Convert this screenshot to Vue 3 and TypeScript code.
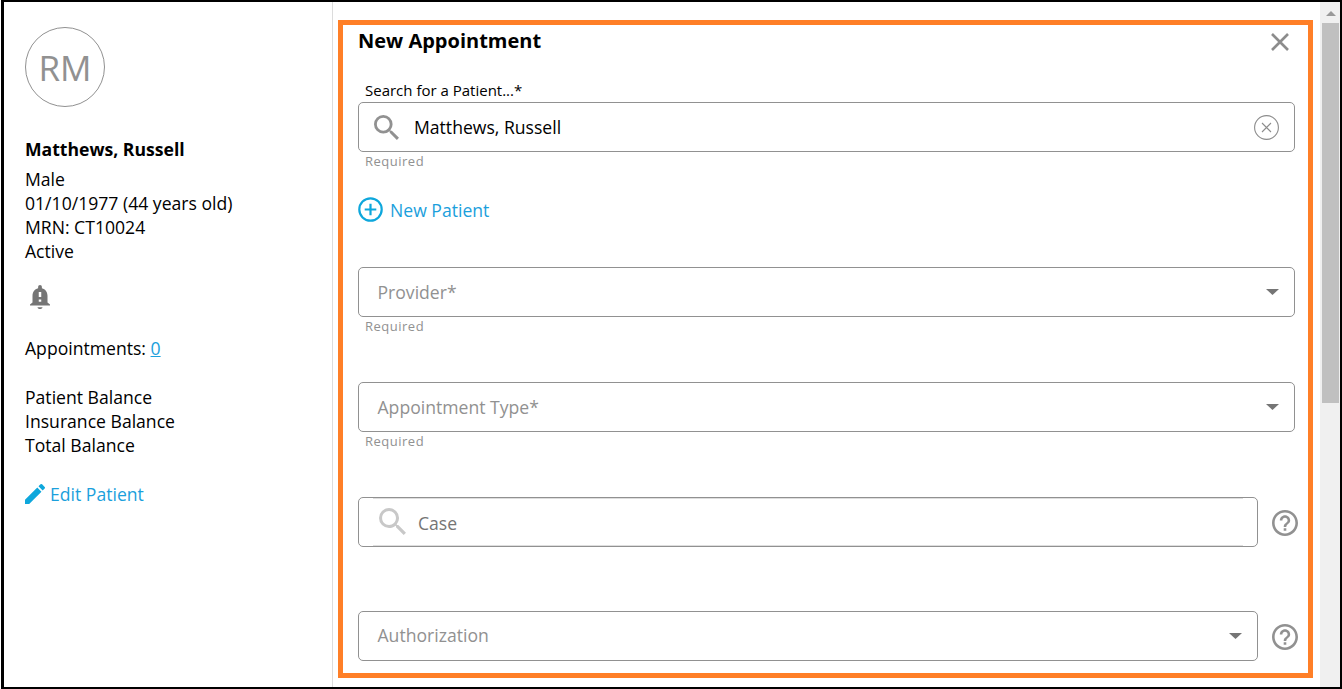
<script setup lang="ts">
interface Field {
  id: string
  label: string
  kind: 'select' | 'search'
  required: boolean
  help: boolean
}

const patient = {
  initials: 'RM',
  name: 'Matthews, Russell',
  details: ['Male', '01/10/1977 (44 years old)', 'MRN: CT10024', 'Active'],
  appointments: 0,
}

const balances: string[] = ['Patient Balance', 'Insurance Balance', 'Total Balance']

const fields: Field[] = [
  { id: 'provider', label: 'Provider*', kind: 'select', required: true, help: false },
  { id: 'type', label: 'Appointment Type*', kind: 'select', required: true, help: false },
  { id: 'case', label: 'Case', kind: 'search', required: false, help: true },
  { id: 'auth', label: 'Authorization', kind: 'select', required: false, help: true },
]
</script>

<template>
  <div class="window">
    <aside class="sidebar">
      <div class="avatar"><span>{{ patient.initials }}</span></div>
      <h2 class="name"><span>{{ patient.name }}</span></h2>
      <div v-for="line in patient.details" :key="line" class="line"><span>{{ line }}</span></div>
      <svg class="bell" viewBox="4 2 16 20" preserveAspectRatio="none">
        <path fill="#757575" d="M12 22c1.1 0 2-.7 2-1.5h-4c0 .8.9 1.5 2 1.5zm6-5.5V11c0-3.07-1.63-5.64-4.5-6.32V3.5a1.5 1.5 0 0 0-3 0v1.18C7.64 5.36 6 7.92 6 11v5.5l-2 1.8V19h16v-.7l-2-1.8zM13 16h-2v-2h2v2zm0-4h-2V7.8h2V12z" />
      </svg>
      <div class="line appointments">Appointments: <a>{{ patient.appointments }}</a></div>
      <div class="balances">
        <div v-for="b in balances" :key="b" class="line"><span>{{ b }}</span></div>
      </div>
      <a class="edit">
        <svg viewBox="3 3 18 18" width="20" height="20">
          <path fill="#0ea7dc" d="M3 17.25V21h3.75L17.81 9.94l-3.75-3.75L3 17.25zM20.71 7.04a1 1 0 0 0 0-1.41l-2.34-2.34a1 1 0 0 0-1.41 0l-1.83 1.83 3.75 3.75 1.83-1.83z" />
        </svg>
        <span>Edit Patient</span>
      </a>
    </aside>

    <main class="main">
      <section class="panel">
        <header class="head">
          <h1><span>New Appointment</span></h1>
          <svg class="close" viewBox="0 0 18 18" width="18" height="18">
            <path d="M1 1L17 17M17 1L1 17" fill="none" stroke="#8c8c8c" stroke-width="2.6" />
          </svg>
        </header>

        <label class="caption"><span>Search for a Patient...*</span></label>
        <div class="box patient-box">
          <svg class="lens" viewBox="3 3 17.5 17.5" width="25" height="25">
            <path fill="#919191" d="M15.5 14h-.79l-.28-.27A6.47 6.47 0 0 0 16 9.5 6.5 6.5 0 1 0 9.5 16c1.61 0 3.09-.59 4.23-1.57l.27.28v.79l5 4.99L20.49 19l-4.99-5zm-6 0C7.01 14 5 11.99 5 9.5S7.01 5 9.5 5 14 7.01 14 9.5 11.99 14 9.5 14z" />
          </svg>
          <span class="value">{{ patient.name }}</span>
          <svg class="clear" viewBox="0 0 25 25" width="25" height="25" fill="none" stroke="#8c8c8c">
            <circle cx="12.5" cy="12.5" r="11.9" stroke-width="1.1" />
            <path d="M8 8L17 17M17 8L8 17" stroke-width="1.1" />
          </svg>
        </div>
        <div class="hint"><span>Required</span></div>

        <a class="new-patient">
          <svg viewBox="0 0 25 25" width="25" height="25" fill="none" stroke="#0ea7dc" stroke-width="2.2">
            <circle cx="12.5" cy="12.5" r="11.2" />
            <path d="M12.5 6.7V18.3M6.7 12.5H18.3" />
          </svg>
          <span>New Patient</span>
        </a>

        <div v-for="f in fields" :key="f.id" class="field" :class="f.id">
          <div class="row">
            <div class="box">
              <svg v-if="f.kind === 'search'" class="lens pale" viewBox="3 3 17.5 17.5" width="27" height="27">
                <path fill="#c8c8c8" d="M15.5 14h-.79l-.28-.27A6.47 6.47 0 0 0 16 9.5 6.5 6.5 0 1 0 9.5 16c1.61 0 3.09-.59 4.23-1.57l.27.28v.79l5 4.99L20.49 19l-4.99-5zm-6 0C7.01 14 5 11.99 5 9.5S7.01 5 9.5 5 14 7.01 14 9.5 11.99 14 9.5 14z" />
              </svg>
              <span class="placeholder">{{ f.label }}</span>
              <svg v-if="f.kind === 'select'" class="arrow" viewBox="0 0 13 6" width="13" height="6">
                <path d="M0 0H13L6.5 6Z" fill="#757575" />
              </svg>
            </div>
            <svg v-if="f.help" class="help" viewBox="2 2 20 20" width="26" height="26">
              <path fill="#919191" d="M11 18h2v-2h-2v2zm1-16C6.48 2 2 6.48 2 12s4.48 10 10 10 10-4.48 10-10S17.52 2 12 2zm0 18c-4.41 0-8-3.59-8-8s3.59-8 8-8 8 3.59 8 8-3.59 8-8 8zm0-14c-2.21 0-4 1.79-4 4h2c0-1.1.9-2 2-2s2 .9 2 2c0 2-3 1.75-3 5h2c0-2.25 3-2.5 3-5 0-2.21-1.79-4-4-4z" />
            </svg>
          </div>
          <div v-if="f.required" class="hint"><span>Required</span></div>
        </div>
      </section>
    </main>

    <div class="scrollbar">
      <svg viewBox="0 0 10 5" width="10" height="5"><path d="M0 5L5 0L10 5Z" fill="#999" /></svg>
      <div class="thumb"></div>
    </div>
  </div>
</template>

<style>
html, body { background: #fff; }
</style>

<style scoped>
* { box-sizing: border-box; }
.window {
  width: 1341px;
  height: 689px;
  margin-left: 1px;
  display: flex;
  border: 2px solid #000;
  border-left-width: 3px;
  background: #fff;
  color: #000;
  font: 390 17.6px/24px "Open Sans", "Noto Sans", sans-serif;
  white-space: nowrap;
}
h1, h2 { margin: 0; }
.sidebar {
  flex: none;
  width: 329px;
  padding: 25px 0 0 21px;
  border-right: 1px solid #dcdcdc;
}
.avatar {
  width: 80px;
  height: 80px;
  border: 1px solid #919191;
  border-radius: 50%;
  display: flex;
  align-items: center;
  justify-content: center;
  padding-top: 1px;
  color: #919191;
  font-size: 35px;
  font-weight: 400;
}
.name {
  margin: 30px 0 6px;
  font-size: 17.6px;
  line-height: 24px;
  font-weight: 700;
}
.line { height: 24px; }
.bell {
  display: block;
  width: 20px;
  height: 24px;
  margin: 22px 0 0 5px;
}
.appointments { margin-top: 27px; }
.appointments a { color: #1ba0dc; text-decoration: underline; }
.balances { margin-top: 25px; }
.edit {
  display: flex;
  align-items: center;
  gap: 5px;
  height: 24px;
  margin-top: 25px;
  color: #1ba0dc;
}
.main { flex: 1; min-width: 0; padding: 18px 7px 0 5px; }
.panel {
  height: 658px;
  border: 5px solid #ff7f27;
  padding: 3px 10px 0 15px;
}
.head {
  display: flex;
  justify-content: space-between;
  height: 26px;
}
.head h1 { font-size: 20px; line-height: 26px; font-weight: 700; }
.close { margin: 5px 9px 0 0; }
.caption {
  display: block;
  margin: 25px 0 1px 7px;
  height: 22px;
  font-size: 15px;
  font-weight: 400;
  line-height: 22px;
}
.box {
  width: 937px;
  height: 50px;
  border: 1px solid #919191;
  border-radius: 5px;
  display: flex;
  align-items: center;
  padding-left: 18.5px;
}
.patient-box { padding: 0 15px; }
.value { margin-left: 15px; }
.clear { margin-left: auto; }
.hint {
  margin: -1px 0 0 7px;
  height: 21px;
  color: #919191;
  font-size: 13px;
  font-weight: 400;
  line-height: 20px;
  letter-spacing: 0.5px;
}
.new-patient {
  display: flex;
  align-items: center;
  gap: 7px;
  height: 25px;
  margin: 25px 0 45px;
  color: #1ba0dc;
}
.field { height: 115px; }
.field.case { height: 114px; }
.field.auth { height: 50px; }
.row { display: flex; align-items: center; }
.case .box, .auth .box { flex: none; width: 900px; }
.case .box {
  padding-left: 20px;
  background:
    linear-gradient(#dedede, #dedede) 14px 0 / 870px 1px no-repeat,
    linear-gradient(#dedede, #dedede) 14px 100% / 870px 1px no-repeat;
}
.placeholder { color: #919191; font-weight: 400; }
.case .placeholder { margin-left: 12px; padding-top: 2px; color: #757575; }
.auth .placeholder { margin-top: -2px; }
.pale { margin-top: -1px; }
.arrow { margin: 0 15px 0 auto; }
.help { flex: none; margin: 2px 0 0 14px; }
.scrollbar {
  flex: none;
  width: 20px;
  background: #f0f0f0;
  padding: 9px 1px 0 2px;
}
.scrollbar svg { display: block; margin: 0 0 7px 4px; }
.thumb { height: 380px; background: #c0c0c0; }
</style>
